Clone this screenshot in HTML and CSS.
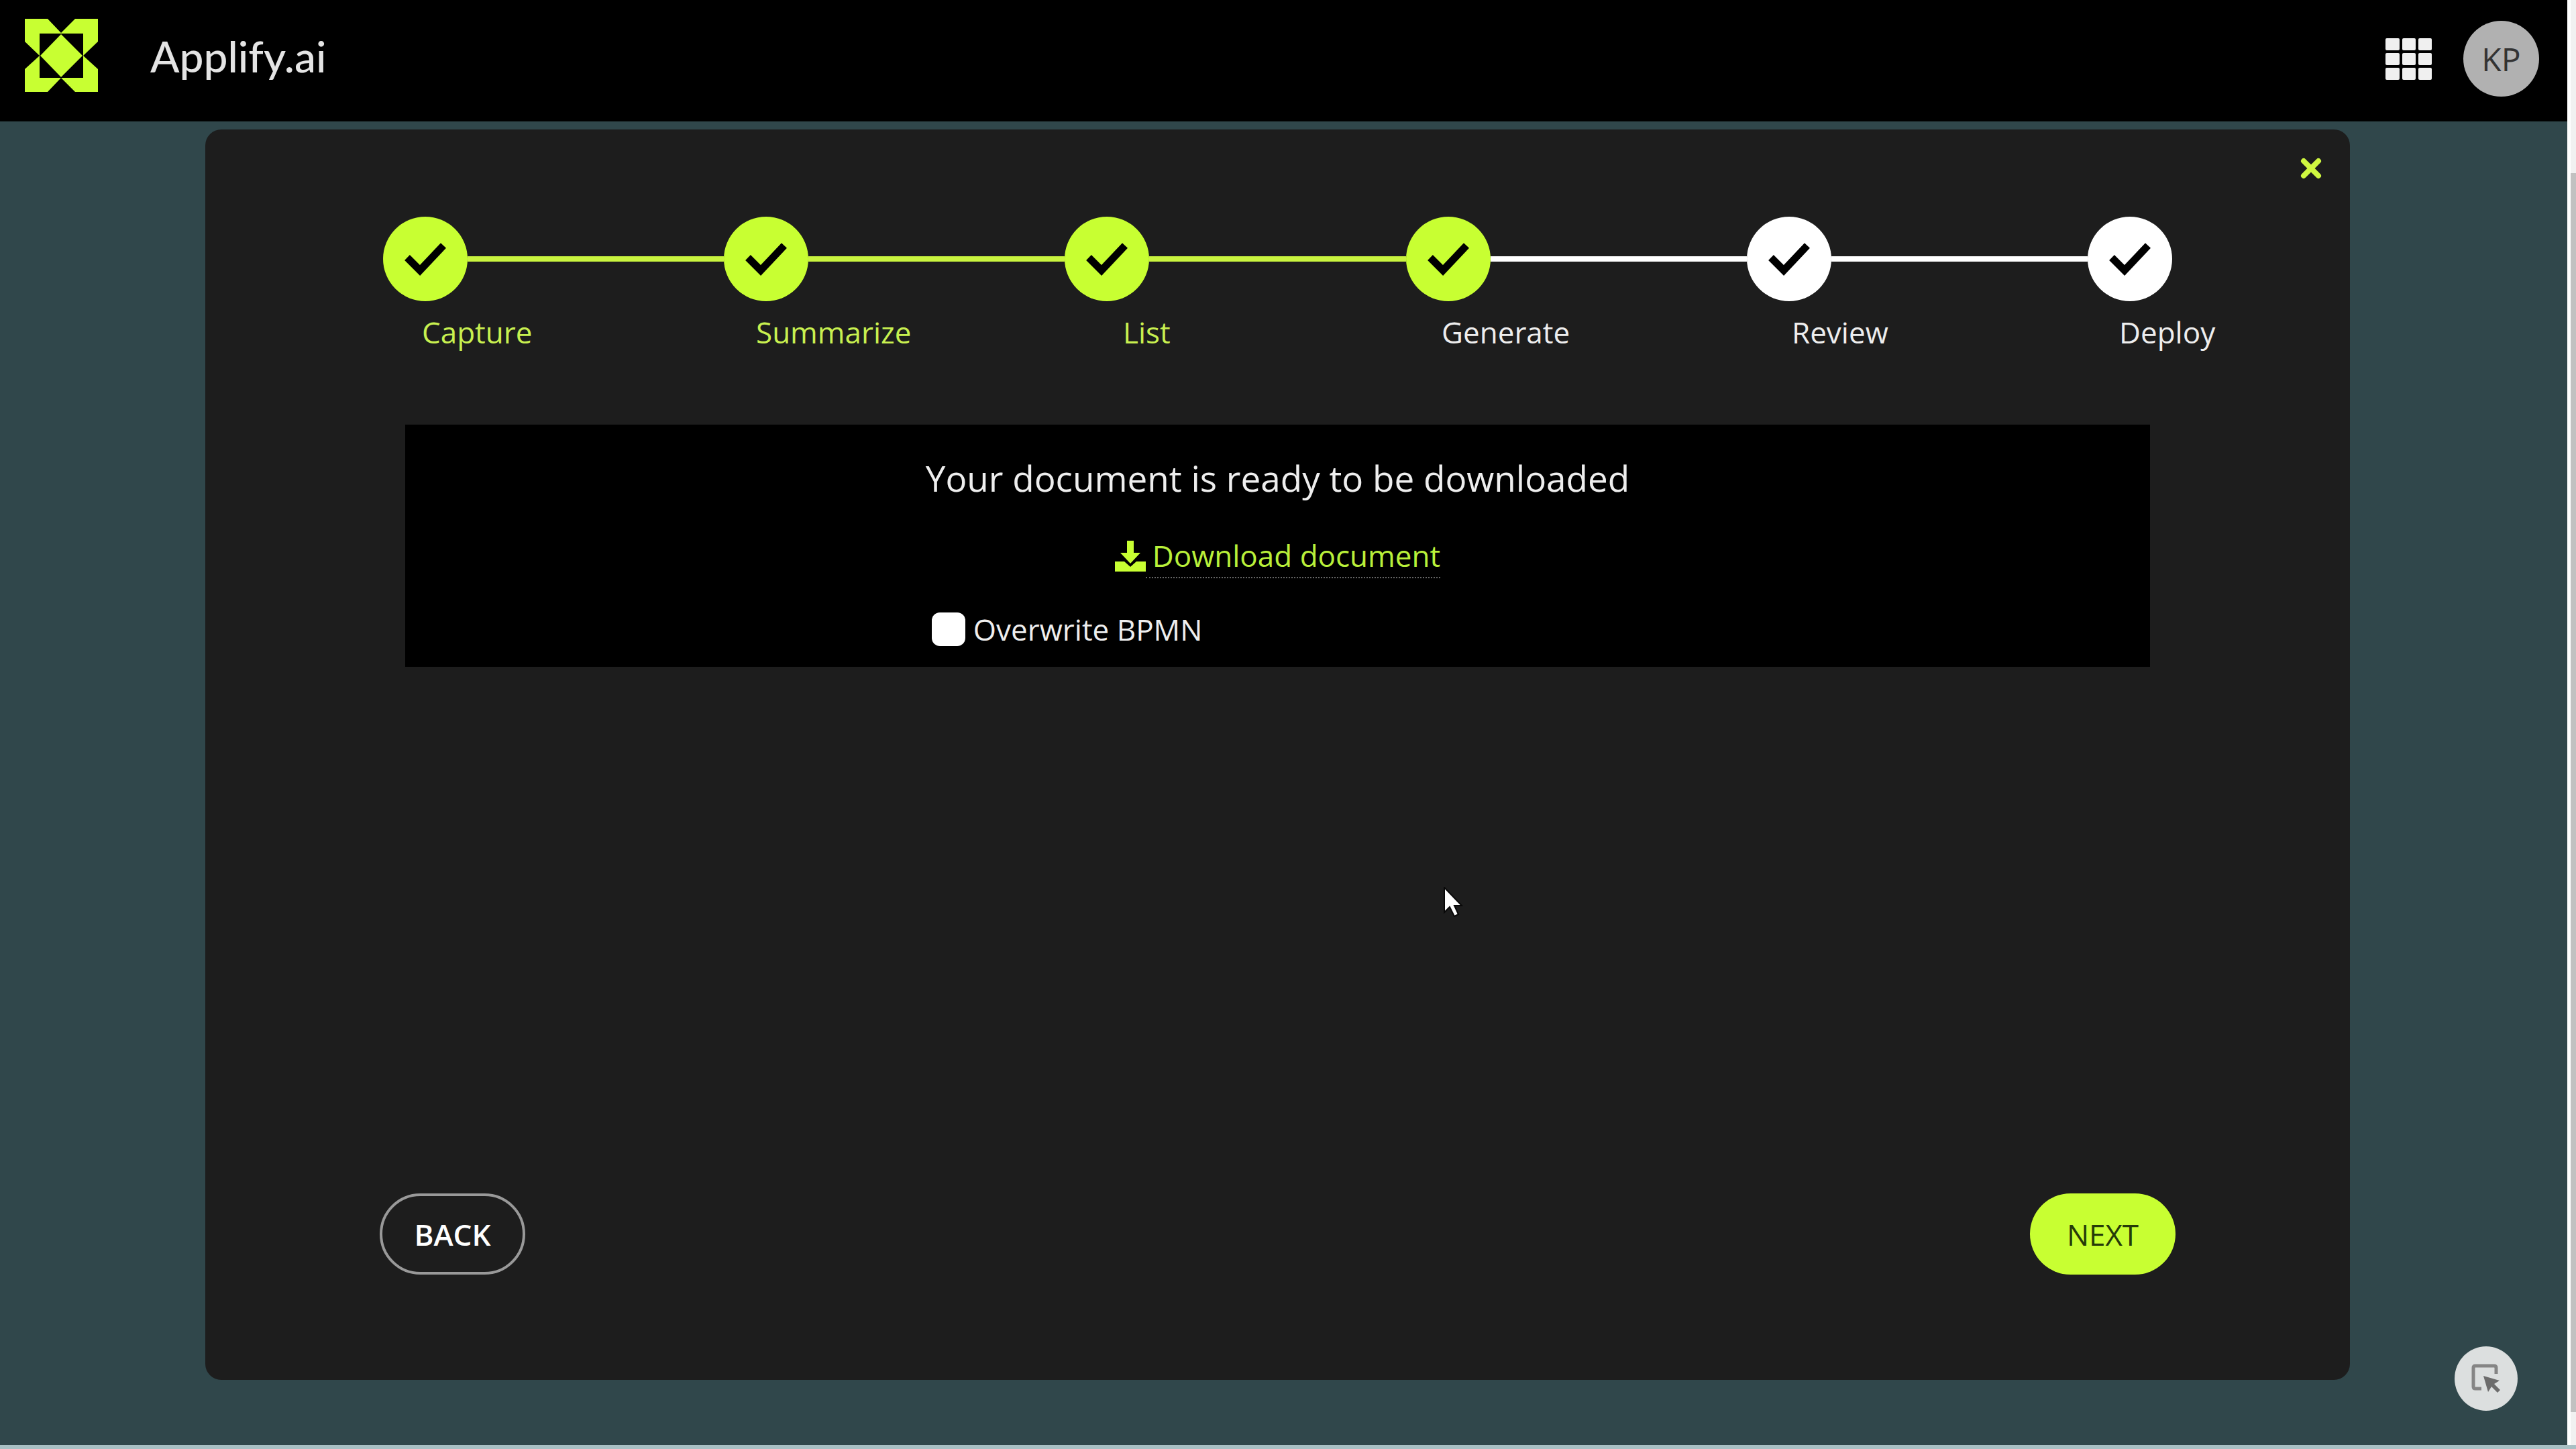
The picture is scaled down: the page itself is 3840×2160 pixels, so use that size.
FILE: index.html
```html
<!DOCTYPE html>
<html lang="en">
<head>
<meta charset="utf-8">
<title>Applify.ai</title>
<link rel="stylesheet" href="styles.css">
</head>
<body>
<svg class="sprite" aria-hidden="true">
  <symbol id="check" viewBox="0 0 64 52"><path d="M5 24 24 43 59 6" fill="none" stroke="currentColor" stroke-width="11"/></symbol>
</svg>
<div class="app">
  <header class="topbar">
    <a class="brand" href="#">
      <svg class="logo" viewBox="0 0 109 109" aria-hidden="true">
        <path fill="#c8ff32" fill-rule="evenodd" d="M0 0H34L54 21 75 0H109V34L87 55 109 75V109H75L54 88 34 109H0V75L22 55 0 34ZM22 22V88H87V22Z"/>
        <path fill="#c8ff32" d="M54 23 86 55 54 87 23 55Z"/>
      </svg>
      <span class="brand-name">Applify.ai</span>
    </a>
    <div class="tools">
      <button class="icon-button" type="button" aria-label="Apps">
        <svg class="apps" viewBox="0 0 70 62" fill="#f0f0f0" aria-hidden="true">
          <rect width="21" height="18" rx="2"/><rect x="25" width="20" height="18" rx="2"/><rect x="49" width="20" height="18" rx="2"/>
          <rect y="22" width="21" height="18" rx="2"/><rect x="25" y="22" width="20" height="18" rx="2"/><rect x="49" y="22" width="20" height="18" rx="2"/>
          <rect y="44" width="21" height="18" rx="2"/><rect x="25" y="44" width="20" height="18" rx="2"/><rect x="49" y="44" width="20" height="18" rx="2"/>
        </svg>
      </button>
      <button class="avatar" type="button">KP</button>
    </div>
  </header>
  <main class="stage">
    <section class="dialog">
      <button class="close icon-button" type="button" aria-label="Close">
        <svg class="close-icon" viewBox="0 0 32 32" aria-hidden="true"><path d="M5 5 27 27M27 5 5 27" stroke="#d0f840" stroke-width="8" stroke-linecap="round"/></svg>
      </button>
      <ol class="steps">
        <li class="step done"><span class="dot"><svg><use href="#check"/></svg></span></li>
        <li class="step done"><span class="dot"><svg><use href="#check"/></svg></span></li>
        <li class="step done"><span class="dot"><svg><use href="#check"/></svg></span></li>
        <li class="step current"><span class="dot"><svg><use href="#check"/></svg></span></li>
        <li class="step"><span class="dot"><svg><use href="#check"/></svg></span></li>
        <li class="step"><span class="dot"><svg><use href="#check"/></svg></span></li>
      </ol>
      <div class="labels">
        <span class="label-done">Capture</span>
        <span class="label-done">Summarize</span>
        <span class="label-done">List</span>
        <span>Generate</span>
        <span>Review</span>
        <span>Deploy</span>
      </div>
      <div class="card">
        <div class="card-body">
          <h1 class="title">Your document is ready to be downloaded</h1>
          <a class="download" href="#">
            <svg class="download-icon" viewBox="0 0 46 46" fill="#c8ff32" aria-hidden="true"><path d="M18 0H28V18H38L23 34 8 18H18ZM0 31H14L23 39 32 31H46V46H0Z"/></svg>
            <span class="download-text">Download document</span>
          </a>
          <label class="option"><input class="checkbox" type="checkbox">Overwrite BPMN</label>
        </div>
      </div>
      <div class="actions">
        <button class="button outline" type="button">BACK</button>
        <button class="button primary" type="button">NEXT</button>
      </div>
    </section>
  </main>
</div>
<div class="scrollbar" aria-hidden="true"><div class="thumb"></div></div>
<button class="fab" type="button" aria-label="Select element">
  <svg class="fab-icon" viewBox="0 0 44 44" aria-hidden="true"><path d="M37 15V6Q37 3 34 3H6Q3 3 3 6V34Q3 37 6 37H15" fill="none" stroke="#858585" stroke-width="5"/><path d="M18 18 42 25 34 30 43 39 39 43 30 34 25 42Z" fill="#6c6c6c"/></svg>
</button>
<svg class="cursor" viewBox="0 0 30 46" aria-hidden="true"><path d="M2 1V38L10 30 17 44 23 41 17 28H28Z" fill="#fff" stroke="#080808" stroke-width="2"/></svg>
</body>
</html>
```
FILE: styles.css
```css
* { box-sizing: border-box; }

body {
  margin: 0;
  min-height: 100vh;
  display: flex;
  background: #fff;
  border-bottom: 6px solid #a9c0c4;
  color: #eee;
  font-family: "Open Sans", "Noto Sans", sans-serif;
  font-size: 44px;
  font-weight: 500;
  line-height: 64px;
}

button { font: inherit; cursor: pointer; }

.sprite { position: absolute; width: 0; height: 0; }

.app {
  flex: 1;
  display: flex;
  flex-direction: column;
  background: #30474b;
}

.topbar {
  display: flex;
  justify-content: space-between;
  align-items: center;
  height: 181px;
  padding: 0 42px 6px 37px;
  background: #000;
}

.brand {
  display: flex;
  align-items: center;
  gap: 78px;
  color: #e4e4e4;
  text-decoration: none;
}

.logo { width: 109px; height: 109px; margin-bottom: 10px; }

.brand-name {
  padding-bottom: 8px;
  font-family: Lato, sans-serif;
  font-size: 64px;
}

.tools { display: flex; align-items: center; gap: 46px; }

.icon-button {
  display: flex;
  padding: 0;
  border: 0;
  background: none;
}

.apps { width: 70px; height: 62px; }

.avatar {
  width: 113px;
  height: 113px;
  padding: 0;
  border: 0;
  border-radius: 50%;
  background: #b1b1b1;
  color: #333;
  font-size: 48px;
}

.stage {
  flex: 1;
  display: flex;
  padding: 12px 324px 97px 306px;
}

.dialog {
  flex: 1;
  display: flex;
  flex-direction: column;
  padding: 42px 260px 157px;
  border-radius: 24px;
  background: #1d1d1d;
}

.close { align-self: flex-end; margin-right: -218px; }
.close-icon { width: 32px; height: 32px; }

.steps {
  display: flex;
  margin: 56px 5px 0;
  padding: 0;
  list-style: none;
}

.step { flex: 1; display: flex; align-items: center; color: #fff; }
.step::after { content: ""; flex: 1; height: 8px; background: #fff; }
.step:last-child { flex: none; }
.step:last-child::after { display: none; }
.done::after { background: #c9f43f; }

.dot {
  display: flex;
  align-items: center;
  justify-content: center;
  width: 126px;
  height: 126px;
  border-radius: 50%;
  background: #fff;
  color: #000;
}

.done .dot, .current .dot { background: #c8ff32; }
.dot svg { width: 64px; height: 52px; }

.labels {
  display: grid;
  grid-template-columns: 498fr 547fr 475fr 522fr 488fr 150fr;
  margin: 14px -66px 0 63px;
}

.label-done { color: #c8f050; }

.card {
  display: flex;
  justify-content: center;
  margin: 106px 38px 0;
  padding: 42px 0 24px;
  background: #000;
}

.card-body { display: flex; flex-direction: column; align-items: center; }

.title { margin: 0; font-size: 53px; line-height: 76px; font-weight: 400; }

.download {
  display: flex;
  align-items: center;
  margin-top: 45px;
  color: #b9f03a;
  text-decoration: none;
}

.download-icon { width: 46px; height: 46px; }
.download-text { padding-left: 10px; border-bottom: 2px dotted #666; }

.option {
  align-self: flex-start;
  display: flex;
  align-items: center;
  gap: 12px;
  margin: 44px 0 0 9px;
}

.checkbox {
  appearance: none;
  width: 50px;
  height: 50px;
  margin: 0;
  border-radius: 12px;
  background: #fff;
}

.actions { display: flex; justify-content: space-between; margin-top: auto; }

.button {
  width: 217px;
  height: 121px;
  padding: 0;
  border-radius: 62px;
}

.outline { border: 4px solid #999; background: none; color: #fff; font-weight: 600; }
.primary { border: 0; background: #c8ff32; color: #263a08; }

.scrollbar {
  width: 13px;
  padding: 258px 0 49px 5px;
  display: flex;
  background: linear-gradient(90deg, #fff 5px, #f1f1f1 5px);
}

.thumb { flex: 1; background: #c1c1c1; }

.fab {
  position: absolute;
  right: 87px;
  bottom: 57px;
  display: flex;
  align-items: center;
  justify-content: center;
  width: 94px;
  height: 96px;
  padding: 0;
  border: 0;
  border-radius: 50%;
  background: #dcdfdf;
}

.fab-icon { width: 44px; height: 44px; }

.cursor {
  position: absolute;
  left: 2151px;
  top: 1322px;
  width: 30px;
  height: 46px;
}
```
